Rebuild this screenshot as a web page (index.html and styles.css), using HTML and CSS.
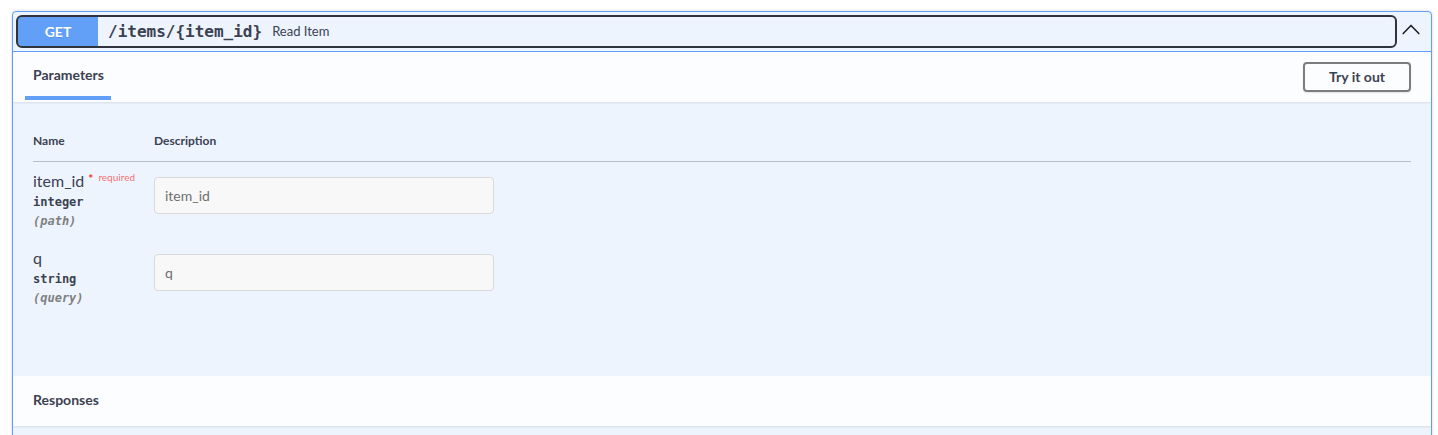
FILE: index.html
```html
<!DOCTYPE html>
<html>
<head>
<meta charset="utf-8">
<link rel="stylesheet" href="styles.css">
</head>
<body>
<div class="wrapper">
  <div class="opblock">
    <div class="summary">
      <div class="summary-control">
        <span class="method">GET</span>
        <span class="path">/items/{item_id}</span>
        <span class="desc">Read Item</span>
      </div>
      <div class="arrow">
        <svg width="20" height="20" viewBox="0 0 20 20"><polyline points="2.2,11.6 10,3.4 17.8,11.6" fill="none" stroke="#1b1b1b" stroke-width="1.5" stroke-linecap="round" stroke-linejoin="round"/></svg>
      </div>
    </div>
    <div class="section-header">
      <div class="tab"><h4>Parameters</h4></div>
      <button class="try-out">Try it out</button>
    </div>
    <div class="table-container">
      <div class="params-head">
        <div class="col-name">Name</div>
        <div class="col-desc">Description</div>
      </div>
      <div class="param-row">
        <div class="col-name">
          <div class="param-name">item_id<span class="star">*</span><span class="req">required</span></div>
          <div class="param-type">integer</div>
          <div class="param-in">(path)</div>
        </div>
        <div class="col-desc"><input class="param-input" type="text" placeholder="item_id"></div>
      </div>
      <div class="param-row">
        <div class="col-name">
          <div class="param-name">q</div>
          <div class="param-type">string</div>
          <div class="param-in">(query)</div>
        </div>
        <div class="col-desc"><input class="param-input" type="text" placeholder="q"></div>
      </div>
    </div>
    <div class="section-header">
      <h4 class="raised">Responses</h4>
    </div>
    <div class="responses-body"></div>
  </div>
</div>
</body>
</html>
```

FILE: styles.css
```css
html, body {
  margin: 0;
  padding: 0;
  background: #ffffff;
}
body {
  font-family: Lato, "Noto Sans CJK KR", sans-serif;
  color: #3b4151;
  overflow: hidden;
}
.wrapper {
  padding: 11px 6px 0 12px;
}
.opblock {
  border: 1px solid #61a0f6;
  border-radius: 4px;
  background: #edf4fe;
  box-shadow: 0 0 3px rgba(0, 0, 0, 0.19);
}
.summary {
  display: flex;
  align-items: center;
  padding: 5px 10px 5px 5px;
  border-bottom: 1px solid #61a0f6;
}
.summary-control {
  flex: 1;
  display: flex;
  align-items: center;
  outline: 2px solid #2f333d;
  border-radius: 4px;
}
.method {
  background: #61a0f6;
  color: #ffffff;
  font-size: 14px;
  font-weight: 700;
  line-height: 17px;
  min-width: 80px;
  text-align: center;
  padding: 6px 0;
  border-radius: 3px 0 0 3px;
  text-shadow: 0 1px 0 rgba(0, 0, 0, 0.1);
}
.path {
  font-family: "DejaVu Sans Mono", monospace;
  font-size: 16px;
  font-weight: 700;
  padding: 0 10px;
  color: #3b4151;
}
.desc {
  font-size: 13px;
  color: #3b4151;
  padding-bottom: 1px;
}
.arrow {
  margin-left: 6px;
  width: 20px;
  height: 20px;
  display: flex;
  align-items: center;
  justify-content: center;
}
.arrow svg {
  display: block;
}
.section-header {
  display: flex;
  align-items: center;
  justify-content: space-between;
  height: 50px;
  padding: 0 20px;
  background: rgba(255, 255, 255, 0.8);
  box-shadow: 0 1px 2px rgba(0, 0, 0, 0.1);
}
.tab {
  position: relative;
  align-self: stretch;
  display: flex;
  align-items: center;
  padding-bottom: 6px;
}
.tab::after {
  content: "";
  position: absolute;
  left: -8px;
  right: -7px;
  bottom: 2px;
  height: 4px;
  background: #61a0f6;
}
h4 {
  margin: 0;
  font-size: 14px;
  font-weight: 700;
  color: #3b4151;
}
.raised {
  padding-bottom: 4px;
}
.try-out {
  font-family: Lato, "Noto Sans CJK KR", sans-serif;
  font-size: 14px;
  font-weight: 700;
  line-height: 16px;
  color: #3b4151;
  background: transparent;
  border: 2px solid #7d7d7d;
  border-radius: 4px;
  padding: 5px 24px;
  box-shadow: 0 1px 2px rgba(0, 0, 0, 0.1);
}
.table-container {
  padding: 20px 20px 60px;
}
.params-head {
  display: flex;
  font-size: 12px;
  font-weight: 700;
  line-height: 15px;
  padding: 11px 0 13px;
  border-bottom: 1px solid rgba(59, 65, 81, 0.3);
}
.col-name {
  width: 121px;
  flex: none;
}
.col-desc {
  flex: 1;
}
.param-row {
  display: flex;
  padding: 10px 0 11px;
}
.param-name {
  font-size: 16px;
  line-height: 18px;
  height: 18px;
  white-space: nowrap;
}
.star {
  color: #ff2a2a;
  font-size: 12px;
  line-height: 10px;
  font-weight: 700;
  vertical-align: top;
  position: relative;
  top: 2px;
  margin-left: 4px;
}
.req {
  color: rgba(255, 0, 0, 0.6);
  font-size: 10px;
  line-height: 10px;
  vertical-align: top;
  margin-left: 5px;
}
.param-type {
  font-family: "DejaVu Sans Mono", monospace;
  font-size: 12px;
  font-weight: 700;
  line-height: 14px;
  padding: 5px 0;
}
.param-in {
  font-family: "DejaVu Sans Mono", monospace;
  font-size: 12px;
  font-weight: 700;
  font-style: italic;
  line-height: 14px;
  color: #808080;
}
.param-input {
  display: block;
  box-sizing: border-box;
  width: 340px;
  height: 37px;
  margin-top: 5px;
  padding: 8px 10px;
  font-family: Lato, "Noto Sans CJK KR", sans-serif;
  font-size: 14px;
  color: #3b4151;
  background: #f8f8f8;
  border: 1px solid #d9d9d9;
  border-radius: 4px;
  outline: none;
}
.param-input::placeholder {
  color: #6f6f6f;
}
.responses-body {
  height: 40px;
}
```
